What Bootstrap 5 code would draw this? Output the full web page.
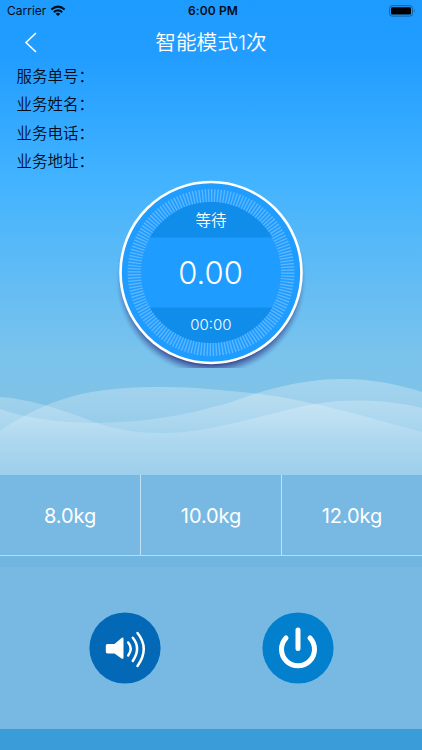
<!DOCTYPE html>
<html lang="zh-CN">
<head>
<meta charset="utf-8">
<meta name="viewport" content="width=device-width, initial-scale=1">
<title>智能模式</title>
<link href="https://cdn.jsdelivr.net/npm/bootstrap@5.3.0/dist/css/bootstrap.min.css" rel="stylesheet">
<style>
body{font-family:Inter,"Noto Sans CJK SC",sans-serif;color:#020c16}
.screen{height:750px;background:linear-gradient(#1e9bff 0,#219dff 55px,#42b3ff 180px,#7ac3ec 355px,#80c2e6 400px,#80c2e6 100%)}
.status{height:22px;padding:0 6px 0 7px;font-size:12px;line-height:22px}
.status .clock{font-weight:600;font-size:12px;letter-spacing:.1px;padding-left:4px}
.title-bar{height:40px;padding-left:23px}
.title-bar h1{font:350 20.7px/40px Inter,"Noto Sans CJK SC",sans-serif;padding-top:1px}
.info{height:116px;padding:.5px 0 0 16.5px;font-weight:350;font-size:15.5px;line-height:28.5px}
.dial-wrap{height:190px}
.waves{height:107px}
.panel-row{height:81px;background:#78b9e4;border-bottom:1px solid #b4dcf6}
.weight{font-size:20px;border-right:1px solid #c0e1f7;letter-spacing:-.1px;padding-top:2px}
.weight:last-child{border-right:0}
.strip{height:11px;background:#71b5e1}
.controls{height:162px;background:#78b9e4;padding:45px 88.5px 0}
.round-btn{width:72px;height:72px}
.foot{height:21px;background:#3a9cd8}
svg{display:block}
</style>
</head>
<body>
<main class="screen d-flex flex-column overflow-hidden">
  <header class="status d-flex justify-content-between align-items-center position-relative">
    <div class="d-flex align-items-center gap-1"><span>Carrier</span>
      <svg width="16" height="12" viewBox="0 0 16 12" fill="none" stroke="#020c16" stroke-width="2"><path d="M1.3 4.5Q8-1.3 14.7 4.5M3.8 7.1Q8 3.7 12.2 7.1"/><path d="M8 11 5.6 8.7Q8 6.9 10.4 8.7Z" fill="#020c16" stroke="none"/></svg>
    </div>
    <span class="clock position-absolute start-50 translate-middle-x text-nowrap">6:00 PM</span>
    <svg width="27" height="12" viewBox="0 0 27 12"><rect x=".5" y=".7" width="23" height="10.4" rx="2.6" fill="none" stroke="#126099"/><rect x="2" y="2.2" width="20" height="7.4" rx="1.3"/><path d="M25 4q1.6 1.9 0 3.8Z" fill="#126099"/></svg>
  </header>
  <div class="title-bar position-relative d-flex align-items-center text-white">
    <svg width="16" height="22" viewBox="0 0 16 22" fill="none" stroke="#fff" stroke-width="1.6"><path d="M13 2 3 11.5 13 21"/></svg>
    <h1 class="m-0 position-absolute start-50 translate-middle-x text-nowrap">智能模式1次</h1>
  </div>
  <section class="info">
    <div>服务单号：</div><div>业务姓名：</div><div>业务电话：</div><div>业务地址：</div>
  </section>
  <section class="dial-wrap d-flex justify-content-center">
    <svg width="202" height="190" viewBox="110 178 202 190" text-anchor="middle" fill="#fff">
      <defs>
        <radialGradient id="shade"><stop offset=".88" stop-color="#38408a"/><stop offset=".94" stop-color="#4568ab" stop-opacity=".55"/><stop offset="1" stop-color="#5d9cd4" stop-opacity="0"/></radialGradient>
        <clipPath id="face"><circle cx="211" cy="272.5" r="70.5"/></clipPath>
      </defs>
      <circle cx="211" cy="280" r="95.5" fill="url(#shade)"/>
      <circle cx="211" cy="272.5" r="90.5" fill="#1f9cff" stroke="#fff" stroke-width="2.6"/>
      <circle cx="211" cy="272.5" r="76.7" fill="none" stroke="#5db7ff" stroke-width="13.4" pathLength="320" stroke-dasharray=".9 1.1"/>
      <g clip-path="url(#face)"><rect x="140" y="202" width="142" height="35.5" fill="#108cea"/><rect x="140" y="307.5" width="142" height="36" fill="#108cea"/></g>
      <text x="211" y="226" font-size="15.5" font-weight="350">等待</text>
      <text x="210.5" y="283.5" font-size="31" font-weight="300">0.00</text>
      <text x="211" y="329.5" font-size="15" font-weight="350">00:00</text>
    </svg>
  </section>
  <svg class="waves w-100 flex-shrink-0" viewBox="0 368 422 107" preserveAspectRatio="none">
    <defs><linearGradient id="mist" gradientUnits="userSpaceOnUse" x1="0" y1="379" x2="0" y2="475"><stop stop-color="#fff" stop-opacity=".3"/><stop offset=".32" stop-color="#fff" stop-opacity=".22"/><stop offset=".64" stop-color="#fff" stop-opacity=".14"/><stop offset="1" stop-color="#fff" stop-opacity=".08"/></linearGradient></defs>
    <g fill="url(#mist)">
      <path d="M0 431C20 417 45 404 70 397C100 388 135 387 165 387C195 387 230 391 260 394C315 401 370 418 422 432V475H0Z"/>
      <path d="M0 397C30 399 60 409 86 419C110 429 135 433 160 433C205 434 260 415 314 404C350 398 390 400 422 408V475H0Z"/>
      <path d="M0 409C28 419 62 423 100 423C145 422 185 415 211 407.5C235 402 250 394 275 388C330 374 375 377 422 392V475H0Z"/>
    </g>
  </svg>
  <section class="panel-row row g-0 text-white text-center flex-shrink-0">
    <div class="weight col d-flex align-items-center justify-content-center">8.0kg</div>
    <div class="weight col d-flex align-items-center justify-content-center">10.0kg</div>
    <div class="weight col d-flex align-items-center justify-content-center">12.0kg</div>
  </section>
  <div class="strip flex-shrink-0"></div>
  <section class="controls d-flex justify-content-between flex-shrink-0">
    <button class="round-btn btn p-0 border-0" aria-label="声音"><svg width="72" height="72" viewBox="0 0 72 72"><circle cx="36" cy="36" r="35.6" fill="#0368b5"/><path d="M18.5 32h7l7-6q2-1.2 2 .8v18.8q0 2-2 .8L25.5 41.500h-7q-1.700 0-1.700-1.700v-6.100q0-1.700 1.700-1.700Z" fill="#fff"/><path d="M39.200 30.500q5 6 0 13M43.800 25.800q8.500 10.500 0 23.200M48.500 21q12.500 15.500 0 33" fill="none" stroke="#fff" stroke-width="2.500" stroke-linecap="round"/></svg></button>
    <button class="round-btn btn p-0 border-0" aria-label="电源"><svg width="72" height="72" viewBox="0 0 72 72"><circle cx="36" cy="36" r="35.6" fill="#0380cd"/><g fill="none" stroke="#fff" stroke-linecap="round" stroke-width="5"><path d="M36 18v18.500M24 26a16.500 16.500 0 1 0 24 0"/></g></svg></button>
  </section>
  <footer class="foot flex-shrink-0"></footer>
</main>
</body>
</html>
